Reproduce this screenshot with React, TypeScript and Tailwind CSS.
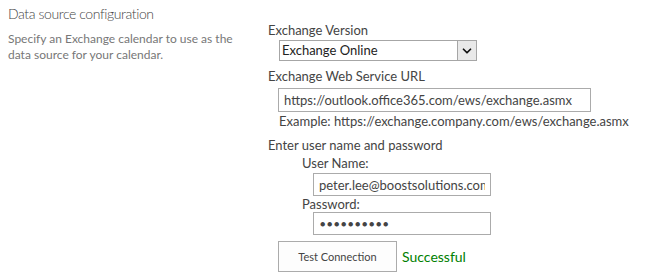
import { ChevronDown } from "lucide-react"

const font = "font-['Lato','Segoe_UI',sans-serif]"

export default function App() {
  return (
    <div className={`flex w-[646px] h-[279px] overflow-hidden bg-white text-[#444] ${font}`}>
      {/* left: section description */}
      <div className="w-[260px] shrink-0 pl-[8px] pt-[4px]">
        <h3 className="text-[14px] leading-[20px] font-light tracking-[-0.4px] text-[#444]">Data source configuration</h3>
        <p className="mt-[7px] text-[12px] leading-[16px] text-[#777] w-[235px]">
          Specify an Exchange calendar to use as the data source for your calendar.
        </p>
      </div>

      {/* right: settings */}
      <div className="min-w-0 flex-1 whitespace-nowrap pl-[8px] pt-[21px] text-[13px] leading-[18px]">
        <div>Exchange Version</div>
        <div className="ml-[11px] mt-[1px] flex h-[21px] w-[198px] items-stretch border border-[#a6a6a6] bg-white">
          <span className="flex-1 pl-[2px] leading-[19px] text-[#222]">Exchange Online</span>
          <span className="flex w-[19px] items-center justify-center border-l border-[#a6a6a6] bg-[#e9e9e9]">
            <ChevronDown className="h-[14px] w-[14px]" strokeWidth={3} color="#111" />
          </span>
        </div>

        <div className="mt-[6px]">Exchange Web Service URL</div>
        <input
          readOnly
          value="https://outlook.office365.com/ews/exchange.asmx"
          className="ml-[10px] mt-[3px] block h-[24px] w-[313px] border border-[#ababab] px-[5px] text-[13px] text-[#444] outline-none"
        />
        <div className="ml-[11px]">Example: https://exchange.company.com/ews/exchange.asmx</div>

        <div className="mt-[6px]">Enter user name and password</div>
        <div className="ml-[34px]">User Name:</div>
        <input
          readOnly
          value="peter.lee@boostsolutions.com"
          className="ml-[45px] mt-[1px] block h-[23px] w-[178px] border border-[#ababab] px-[5px] text-[13px] text-[#444] outline-none"
        />
        <div className="ml-[34px] leading-[16px]">Password:</div>
        <div className="ml-[45px] flex h-[23px] w-[178px] items-center border border-[#ababab] pl-[6px] text-[9px] tracking-[1.6px] text-[#444]">
          ●●●●●●●●●●
        </div>

        <div className="mt-[6px] flex items-center">
          <button className="ml-[10px] h-[31px] w-[119px] border border-[#ababab] bg-[#fdfdfd] text-[11px] text-[#444]">
            Test Connection
          </button>
          <span className="ml-[5px] text-[14px] text-[#008000]">Successful</span>
        </div>
      </div>
    </div>
  )
}
